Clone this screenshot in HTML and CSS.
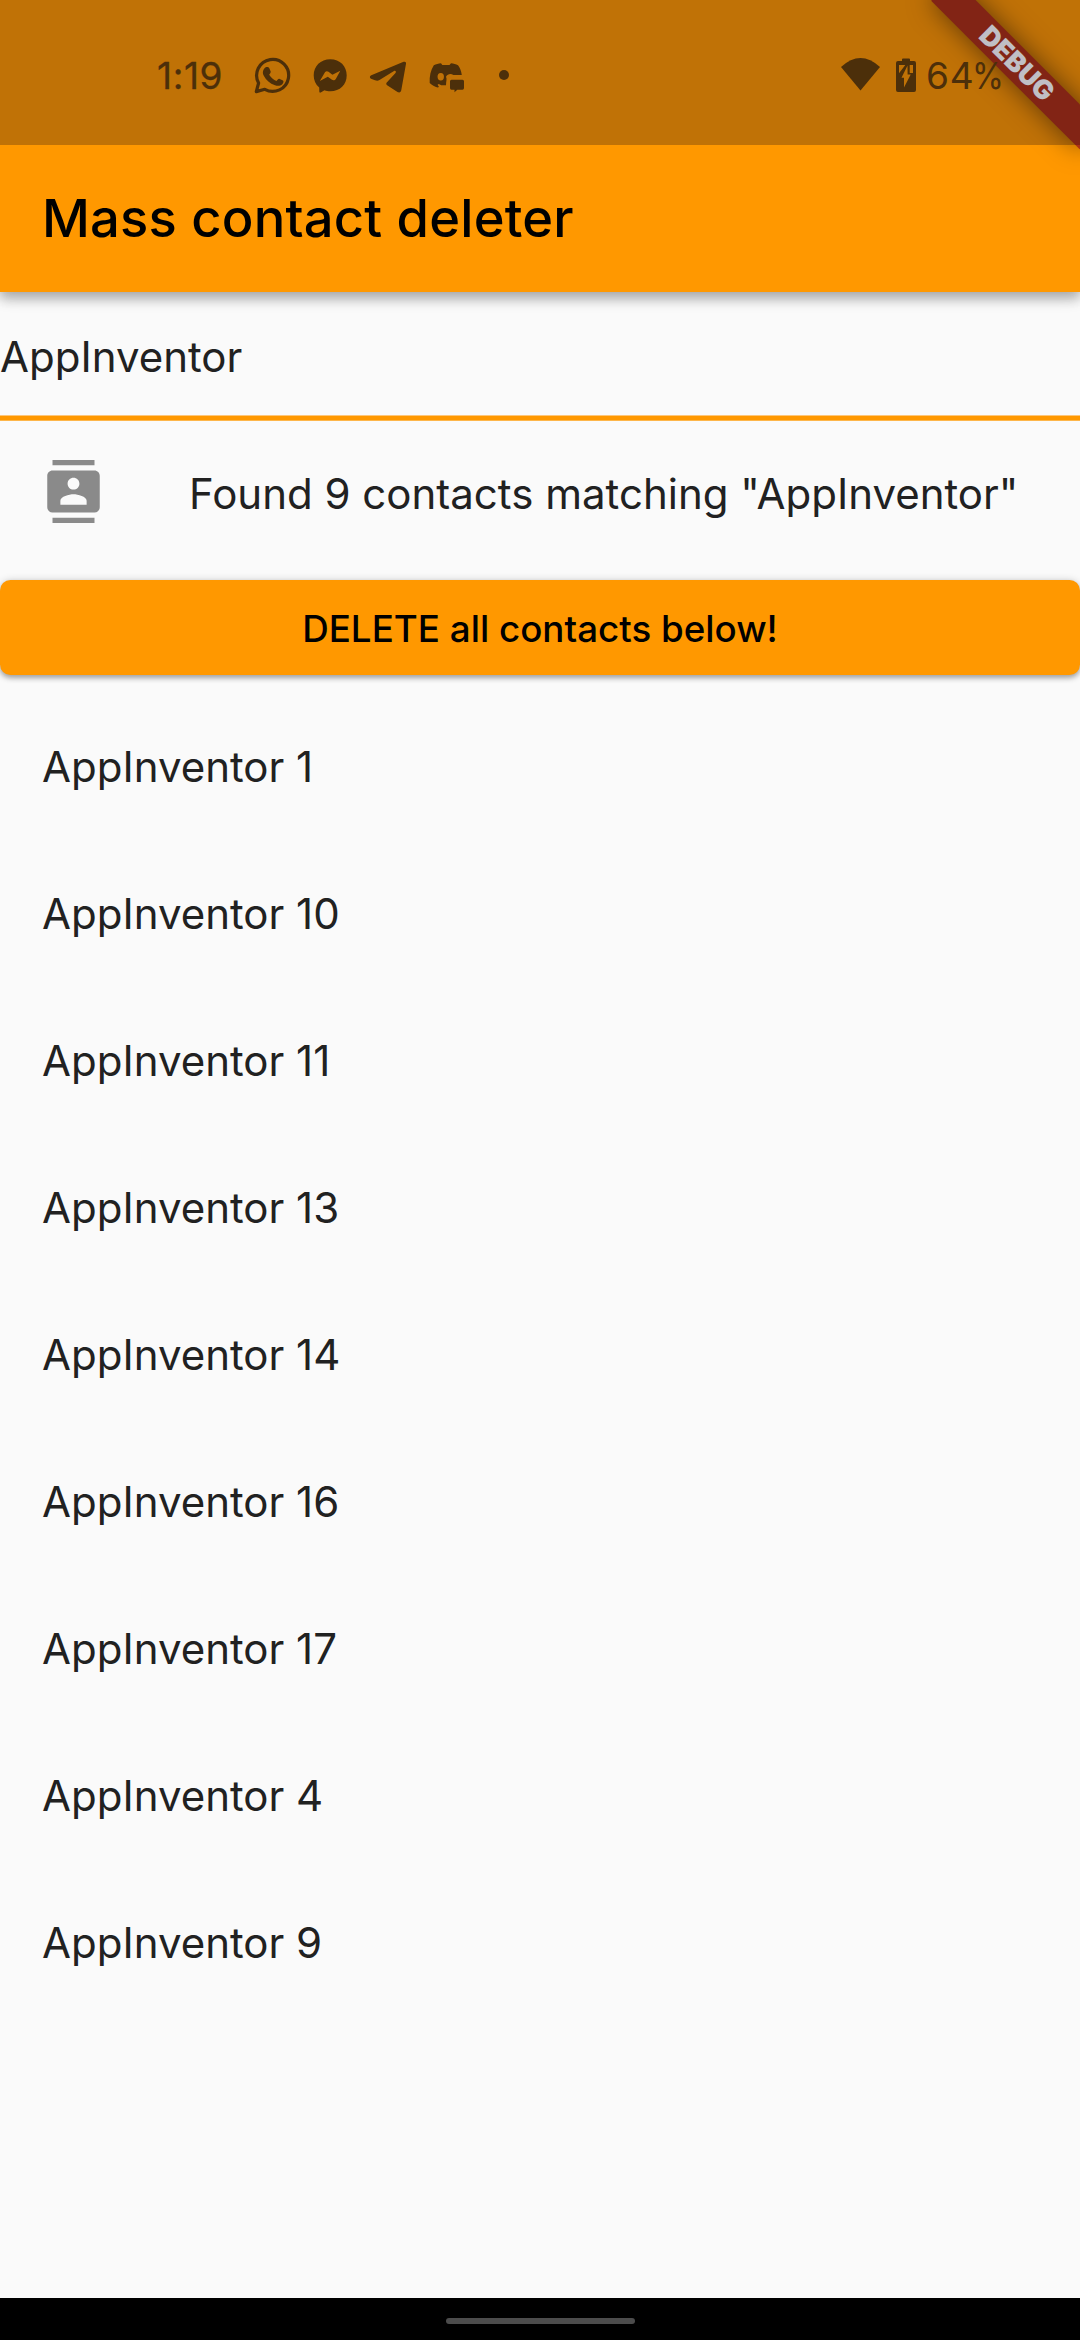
FILE: index.html
```html
<!DOCTYPE html>
<html lang="en">
<head>
<meta charset="utf-8">
<title>Mass contact deleter</title>
<link rel="stylesheet" href="styles.css">
</head>
<body>
<div class="screen">
  <header class="top">
    <div class="banner"><span>DEBUG</span></div>
    <div class="status">
      <span class="clock">1:19</span>
      <svg class="notifications" width="260" height="40" viewBox="250 55 260 40">
        <path d="M256.300 91.600L258.600 83A16 16 0 1 1 264.800 89.300Z" fill="none" stroke="currentColor" stroke-width="3.200" stroke-linejoin="round"/>
        <path d="M265.700 67.300C267 66.600 268.700 66.800 269.300 68.300L270.700 71.500C271 72.400 269.700 73.900 269.200 74.700C271 77.800 273.500 79.800 276.500 81C277.500 79.900 278.300 78.500 279.200 78.700L283 80.500C284 81.100 283.300 83.300 282.300 84.300C280.300 86 277.800 86.300 275 85.300C269.800 83.500 266.300 80.300 263.800 75.800C262.100 72.700 262.900 69.500 265.700 67.300Z"/>
        <path fill-rule="evenodd" d="M330.300 59.200C340 59.200 346.700 66 346.700 75.300C346.700 84.700 340 91.300 330.300 91.300C328 91.300 326.300 90.900 324.500 90.300L320.700 92.500C319.800 92.900 319.300 92.500 319.300 91.500L319.200 87.500C315.500 84.500 313.700 80.200 313.700 75.300C313.700 66 320.600 59.200 330.300 59.200ZM319.800 81L325 72.300C325.800 71 327.300 70.800 328.500 71.700L332.400 74.700L340.300 70.700L335.800 79C335 80.300 333.300 80.700 332 79.800L327.800 76.800Z"/>
        <path d="M371.300 75.300L403 62C405 61.200 406.300 61.700 406 63.800L401.300 90C401 92.200 399.500 93 397.500 92L387.500 85.500C386 84.500 385.900 83.300 387 82.200L395.500 73C396.500 71.500 395.500 70 394 71L379.500 80C378 80.900 376.700 80.900 375 80.300L371 78.800C369.500 78 369.400 76.200 371.300 75.300Z"/>
        <path fill-rule="evenodd" d="M433.800 65.300C436 64.200 438.500 63.400 441 63.300L442.300 65H449.500L451 63.300C453.500 63.400 456 64.300 458 65.300C460 67.700 461.200 71 461.800 75H453.500C450.500 73.300 447.500 74 446 76.800C447.200 79 446 81.500 446 85.200H441.200L438.800 84.100L437.600 84.800L439 87L437.500 87.400C434.700 86.500 432 85.200 429.700 83C429.300 76.500 430.600 70.500 433.800 65.300ZM440.700 73A3.200 3.700 0 1 0 440.800 80.400A3.200 3.700 0 1 0 440.700 73Z"/>
        <path d="M451.500 79.700H462.500Q464 79.700 464 81.200V88Q464 89.700 462.500 89.700H457.300L454.500 92.300V89.700H451.500Q450 89.700 450 88V81.200Q450 79.700 451.500 79.700Z"/>
        <circle cx="504" cy="75" r="5"/>
      </svg>
      <span class="spacer"></span>
      <svg class="system" width="80" height="40" viewBox="838 55 80 40">
        <path d="M841 67Q860.500 49 880 67L860.500 90.500Z"/>
        <path fill-rule="evenodd" d="M902 61V59.500Q902 58.500 903 58.500H909Q910 58.500 910 59.500V61H914Q916 61 916 63V90Q916 92 914 92H898Q896 92 896 90V63Q896 61 898 61ZM899 65V73.200L905.300 65ZM907.500 65.500L901.500 77.800H904V87.500L910.700 74.500H907.600ZM909.700 65V73H913V65Z"/>
      </svg>
      <span class="battery">64<span class="percent">%</span></span>
    </div>
    <h1 class="title">Mass contact deleter</h1>
  </header>
  <main>
    <div class="search">AppInventor</div>
    <div class="summary">
      <svg width="63" height="63" viewBox="0 0 24 24"><path d="M20 0H4v2h16V0zM4 24h16v-2H4v2zM20 4H4c-1.100 0-2 .9-2 2v12c0 1.100.9 2 2 2h16c1.100 0 2-.9 2-2V6c0-1.100-.9-2-2-2zm-8 2.750c1.240 0 2.250 1.010 2.250 2.250s-1.010 2.250-2.250 2.250S9.750 10.240 9.750 9 10.760 6.750 12 6.750zM17 17H7v-1.500c0-1.670 3.330-2.500 5-2.500s5 .83 5 2.500V17z"/></svg>
      <span>Found 9 contacts matching "AppInventor"</span>
    </div>
    <button class="delete">DELETE all contacts below!</button>
    <ul class="contacts">
      <li>AppInventor 1</li>
      <li>AppInventor 10</li>
      <li>AppInventor 11</li>
      <li>AppInventor 13</li>
      <li>AppInventor 14</li>
      <li>AppInventor 16</li>
      <li>AppInventor 17</li>
      <li>AppInventor 4</li>
      <li>AppInventor 9</li>
    </ul>
  </main>
  <footer class="nav"><div class="handle"></div></footer>
</div>
</body>
</html>
```
FILE: styles.css
```css
* { box-sizing: border-box; }
body { margin: 0; font-family: Inter, sans-serif; }
.screen {
  width: 1080px;
  height: 2340px;
  display: flex;
  flex-direction: column;
  overflow: hidden;
  background: #fafafa;
  color: #212121;
  font-size: 42px;
}
.top {
  position: relative;
  height: 292px;
  flex: none;
  background: #ff9800;
  box-shadow: 0 5px 11px rgba(0, 0, 0, .2), 0 8px 13px rgba(0, 0, 0, .14), 0 2px 20px rgba(0, 0, 0, .06);
  clip-path: inset(0 0 -40px 0);
}
/* Diagonal ribbon, rotated about the top right corner of the screen */
.banner {
  position: absolute;
  left: 975px;
  top: 73.500px;
  width: 210px;
  height: 31.500px;
  transform: rotate(45deg);
  transform-origin: 105px -73.500px;
  background: #ad3114;
  box-shadow: 0 0 26px rgba(0, 0, 0, .5);
  display: flex;
  align-items: center;
  justify-content: center;
  color: #fff;
  font-size: 26.800px;
  font-weight: 900;
  line-height: 1;
}
.status {
  position: relative;
  height: 145px;
  padding: 5px 74px 0 157px;
  display: flex;
  align-items: center;
  background: rgba(3, 0, 24, .25);
  color: #4c2f0a;
  font-size: 37px;
}
.status svg { fill: currentColor; flex: none; }
.clock { width: 93px; letter-spacing: .6px; -webkit-text-stroke: .3px; }
.spacer { flex: 1; }
.system { margin-right: 8px; }
.battery { width: 80px; letter-spacing: .7px; white-space: nowrap; }
.percent {
  display: inline-block;
  margin-left: -2px;
  transform: scaleX(.88);
  transform-origin: left;
}
.title {
  margin: 0;
  padding-left: 42px;
  line-height: 146px;
  font-size: 52.500px;
  font-weight: 500;
  letter-spacing: .2px;
  color: #000;
}
main { flex: 1; }
.search {
  height: 129px;
  line-height: 129px;
  background: linear-gradient(#fdc67a 1px, #ff9800 1px 5px, #fdb64a 5px) bottom / 100% 6px no-repeat;
}
.summary {
  height: 144px;
  padding-left: 42px;
  display: flex;
  align-items: center;
  gap: 84px;
  white-space: nowrap;
}
.summary svg { fill: #8a8a8a; flex: none; margin-bottom: 3px; }
.delete {
  display: block;
  width: 100%;
  height: 95px;
  margin: 15px 0;
  padding: 2px 0 0;
  border: 0;
  border-radius: 10.500px;
  background: #ff9800;
  box-shadow: 0 3px 5px rgba(0, 0, 0, .26), 0 1px 8px rgba(0, 0, 0, .2);
  font: 500 36.750px Inter, sans-serif;
  color: #000;
}
.contacts { margin: 0; padding: 0; list-style: none; }
.contacts li {
  height: 147px;
  padding-left: 42px;
  line-height: 153px;
}
.nav {
  height: 42px;
  flex: none;
  background: #000;
  padding-top: 20px;
}
.handle {
  width: 189px;
  height: 6px;
  margin: 0 auto;
  border-radius: 3px;
  background: #4c4c4c;
}
```
